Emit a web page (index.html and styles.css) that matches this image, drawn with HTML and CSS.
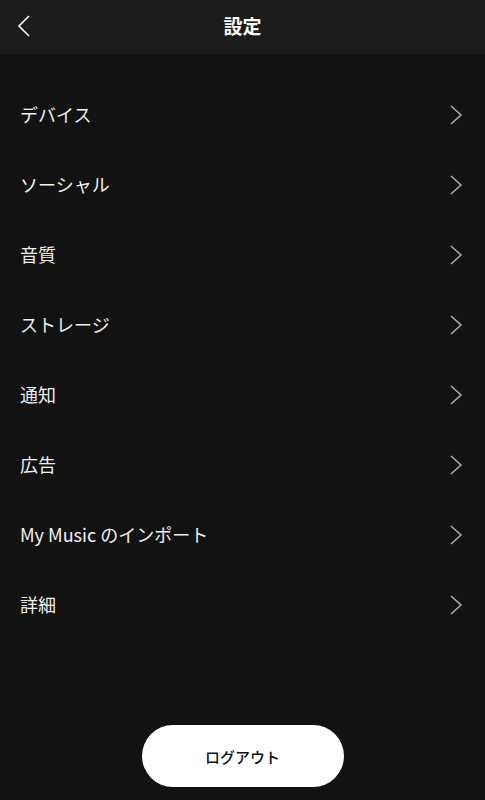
FILE: index.html
```html
<!DOCTYPE html>
<html>
<head>
  <title>設定</title>
  <link rel="stylesheet" href="styles.css">
</head>
<body>
  <div class="header">
    <svg class="back" width="14" height="22" viewBox="0 0 14 22"><path d="M12 1 L2 11 L12 21" fill="none" stroke="#fff" stroke-width="1.6"/></svg>
    <h1>設定</h1>
  </div>

  <ul class="list">
    <li><span>デバイス</span><svg width="14" height="20" viewBox="0 0 14 20"><path d="M2 1 L12 10 L2 19" fill="none" stroke="#aaa" stroke-width="1.6"/></svg></li>
    <li><span>ソーシャル</span><svg width="14" height="20" viewBox="0 0 14 20"><path d="M2 1 L12 10 L2 19" fill="none" stroke="#aaa" stroke-width="1.6"/></svg></li>
    <li><span>音質</span><svg width="14" height="20" viewBox="0 0 14 20"><path d="M2 1 L12 10 L2 19" fill="none" stroke="#aaa" stroke-width="1.6"/></svg></li>
    <li><span>ストレージ</span><svg width="14" height="20" viewBox="0 0 14 20"><path d="M2 1 L12 10 L2 19" fill="none" stroke="#aaa" stroke-width="1.6"/></svg></li>
    <li><span>通知</span><svg width="14" height="20" viewBox="0 0 14 20"><path d="M2 1 L12 10 L2 19" fill="none" stroke="#aaa" stroke-width="1.6"/></svg></li>
    <li><span>広告</span><svg width="14" height="20" viewBox="0 0 14 20"><path d="M2 1 L12 10 L2 19" fill="none" stroke="#aaa" stroke-width="1.6"/></svg></li>
    <li><span>My Music のインポート</span><svg width="14" height="20" viewBox="0 0 14 20"><path d="M2 1 L12 10 L2 19" fill="none" stroke="#aaa" stroke-width="1.6"/></svg></li>
    <li><span>詳細</span><svg width="14" height="20" viewBox="0 0 14 20"><path d="M2 1 L12 10 L2 19" fill="none" stroke="#aaa" stroke-width="1.6"/></svg></li>
  </ul>

  <div class="footer">
    <button>ログアウト</button>
  </div>
</body>
</html>
```

FILE: styles.css
```css
body {
  margin: 0;
  background: #121212;
  color: #fff;
  font-family: "Noto Sans CJK JP", "Noto Sans", sans-serif;
  height: 800px;
  overflow: hidden;
}
.header {
  height: 54px;
  background: #1c1c1c;
  display: flex;
  align-items: center;
  justify-content: center;
  position: relative;
}
.header h1 {
  margin: 0 0 4px 0;
  font-size: 19px;
  font-weight: bold;
  line-height: 1;
}
.back {
  position: absolute;
  left: 17px;
  top: 15px;
}
.list {
  list-style: none;
  margin: 26px 0 0 0;
  padding: 0;
}
.list li {
  height: 70px;
  display: flex;
  align-items: center;
  justify-content: space-between;
  padding: 0 22px 0 20px;
  font-size: 18px;
  color: #f0f0f0;
}
.list li span {
  margin-bottom: 2px;
}
.footer {
  display: flex;
  justify-content: center;
  margin-top: 85px;
}
.footer button {
  width: 202px;
  height: 62px;
  border: none;
  border-radius: 31px;
  background: #fff;
  color: #111;
  font-family: "Noto Sans CJK JP", sans-serif;
  font-size: 15px;
  font-weight: 500;
}
```
